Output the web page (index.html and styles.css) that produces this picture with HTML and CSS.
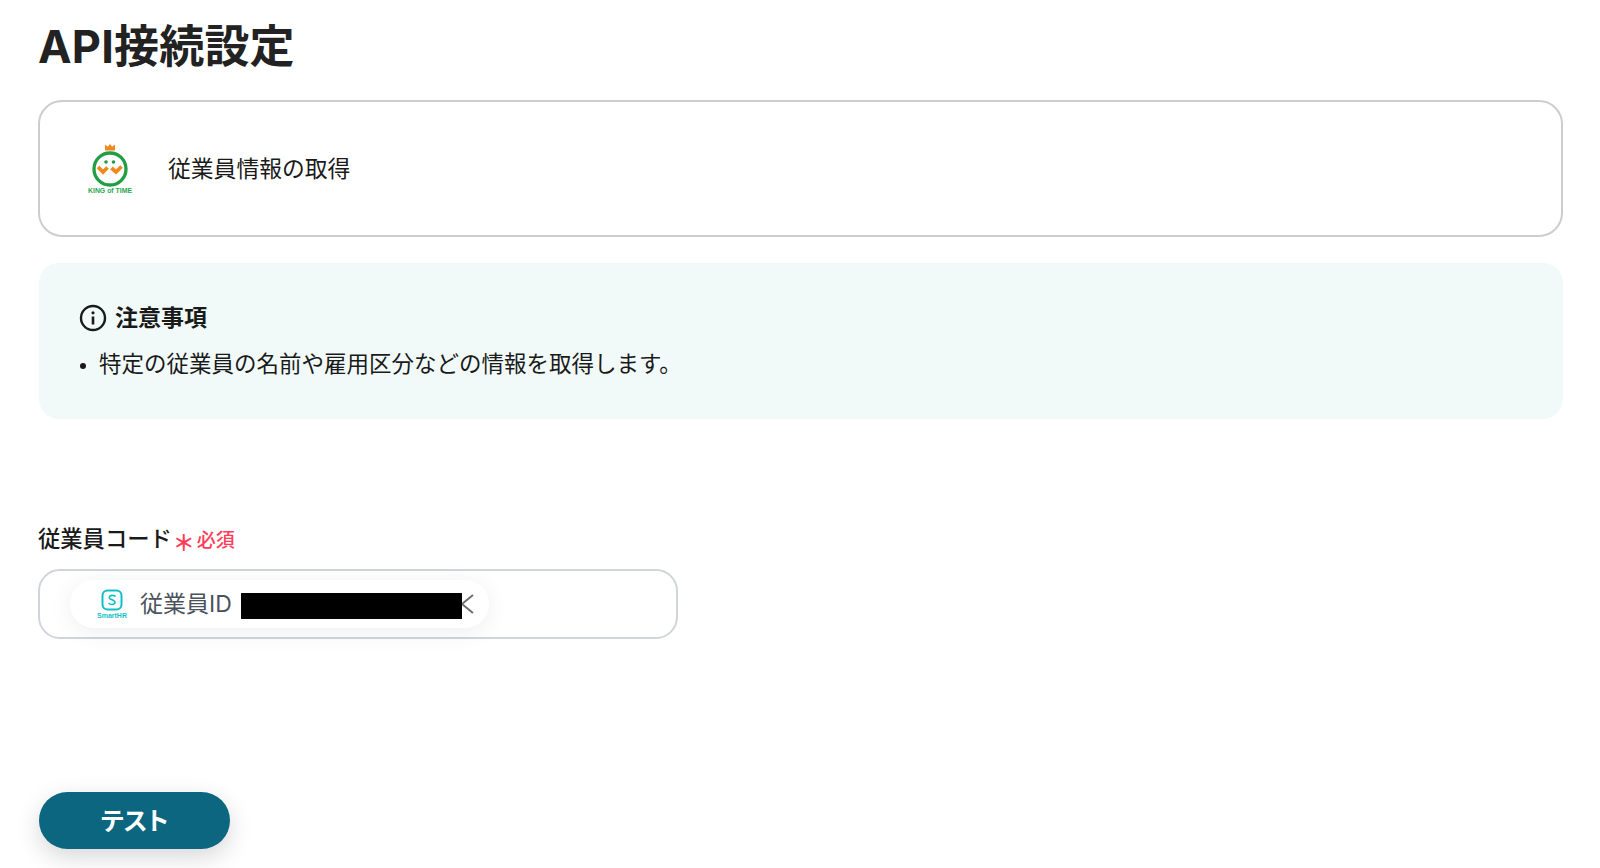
FILE: index.html
```html
<!DOCTYPE html>
<html lang="ja">
<head>
<meta charset="utf-8">
<title>API接続設定</title>
<link rel="stylesheet" href="styles.css">
</head>
<body>
<div class="page">
  <h1 class="title">API接続設定</h1>

  <div class="action_card">
    <svg class="kot_logo" width="48" height="52" viewBox="0 0 48 52">
      <path d="M19 1.500l2.800 2.200L24 1l2.200 2.700L29 1.500V7.500H19z" fill="#ee8a1d"/>
      <circle cx="24" cy="26" r="16" fill="#fff" stroke="#1f9e45" stroke-width="3.300"/>
      <circle cx="20" cy="19" r="1.800" fill="#1f9e45"/>
      <circle cx="27.500" cy="19" r="1.800" fill="#1f9e45"/>
      <path d="M12 24l5 5 4.500-4.500M25.500 25l4.500 4 5.500-5.500" fill="none" stroke="#ee8a1d" stroke-width="3.800"/>
      <text x="24" y="50" class="kot_text" text-anchor="middle" textLength="44" lengthAdjust="spacingAndGlyphs">KING of TIME</text>
    </svg>
    <span class="action_name">従業員情報の取得</span>
  </div>

  <div class="notice">
    <div class="notice_head">
      <svg width="28" height="28" viewBox="0 0 28 28">
        <circle cx="14" cy="14" r="12" fill="none" stroke="#1a1a1a" stroke-width="2.400"/>
        <circle cx="14" cy="8.800" r="1.600" fill="#1a1a1a"/>
        <path d="M14 12.500v8" stroke="#1a1a1a" stroke-width="2.600"/>
      </svg>
      <span>注意事項</span>
    </div>
    <ul class="notice_list">
      <li>特定の従業員の名前や雇用区分などの情報を取得します。</li>
    </ul>
  </div>

  <div class="field">
    <div class="field_label">
      <span class="label_text">従業員コード</span>
      <span class="required"><span class="star">＊</span><span class="required_text">必須</span></span>
    </div>
    <div class="field_input">
      <div class="chip">
        <svg class="hr_logo" width="34" height="34" viewBox="0 0 34 34">
          <rect x="7.500" y="3.500" width="19" height="19" rx="5" fill="#fff" stroke="#12bfc6" stroke-width="2"/>
          <path d="M20.500 9.600c-.7-1.500-5.600-2-6.200.7-.5 2.600 6.200 2.500 5.700 5.300-.5 2.500-5.400 2.200-6.300.5" fill="none" stroke="#12bfc6" stroke-width="1.600"/>
          <text x="17" y="31" class="hr_text" text-anchor="middle" textLength="30" lengthAdjust="spacingAndGlyphs">SmartHR</text>
        </svg>
        <span class="chip_text">従業員ID</span>
        <svg class="chip_close" width="13" height="20" viewBox="0 0 13 20">
          <path d="M12 1L1 10l11 9" fill="none" stroke="#6f6f6f" stroke-width="2"/>
        </svg>
        <span class="mask"></span>
      </div>
    </div>
  </div>

  <button class="test_btn" type="button">テスト</button>
</div>
</body>
</html>
```

FILE: styles.css
```css
* {box-sizing: border-box}
html, body {margin: 0; padding: 0; background: #fff}
body {font-family: "Inter", "Noto Sans CJK JP", sans-serif; color: #1a1a1a; overflow: hidden}
.page {width: 1600px; height: 868px; padding: 19px 37px 0 38px}
.title {margin: 0; font-size: 45px; line-height: 55px; font-weight: 700; letter-spacing: .2px; color: #222}
.action_card {display: flex; align-items: center; gap: 34px; height: 137px; margin-top: 26px; padding-left: 46px; padding-bottom: 2px; border: 2px solid #cdcdcd; border-radius: 24px}
.kot_logo {display: block; margin-top: 2px}
.kot_text {font-family: "Liberation Sans", sans-serif; font-size: 7px; font-weight: 700; fill: #2aa84f}
.action_name {font-size: 22.800px}
.notice {height: 156px; margin: 26px 0 0 1px; padding: 40px 40px 0; background: #f1faf9; border-radius: 20px}
.notice_head {display: flex; align-items: center; gap: 8px; font-size: 23px; font-weight: 700; line-height: 30px}
.notice_list {margin: 15px 0 0; padding: 0 0 0 20px; font-size: 22.500px; line-height: 32px}
.notice_list li {padding: 0}
.notice_list li::marker {font-size: 20px}
.field {margin-top: 102px}
.field_label {display: flex; align-items: center; height: 32px}
.label_text {font-size: 22.300px; font-weight: 500; color: #1a1a1a}
.required {display: flex; align-items: center; margin-left: 1px; font-size: 19px; color: #ff3d5a}
.star {width: 22px; font-size: 22px; font-weight: 700; line-height: 24px; height: 24px; margin-top: 11px; text-align: center}
.required_text {margin: 2px 0 0 2px; font-weight: 500}
.field_input {width: 640px; height: 70px; margin-top: 16px; padding: 9px 0 0 30px; border: 2px solid #d0d5dc; border-radius: 22px}
.chip {position: relative; display: flex; align-items: center; width: 419px; height: 48px; padding-left: 25px; background: #fff; border-radius: 24px; box-shadow: 0 4px 24px rgba(0, 0, 0, .07)}
.hr_logo {display: block; flex: none}
.hr_text {font-family: "Liberation Sans", sans-serif; font-size: 7.500px; font-weight: 700; fill: #12bfc6}
.chip_text {margin: 0 0 4px 11px; font-size: 23px; color: #4a525c}
.chip_close {position: absolute; left: 391px; top: 14px}
.mask {position: absolute; left: 171px; top: 13px; width: 221px; height: 26px; background: #000}
.test_btn {display: block; width: 191px; height: 57px; margin: 153px 0 0 1px; padding: 0 0 4px; border: 0; border-radius: 29px; background: #0d6680; color: #fff; font-family: inherit; font-size: 25px; font-weight: 700; font-feature-settings: "palt"; box-shadow: 0 8px 24px rgba(0, 0, 0, .16)}
```
